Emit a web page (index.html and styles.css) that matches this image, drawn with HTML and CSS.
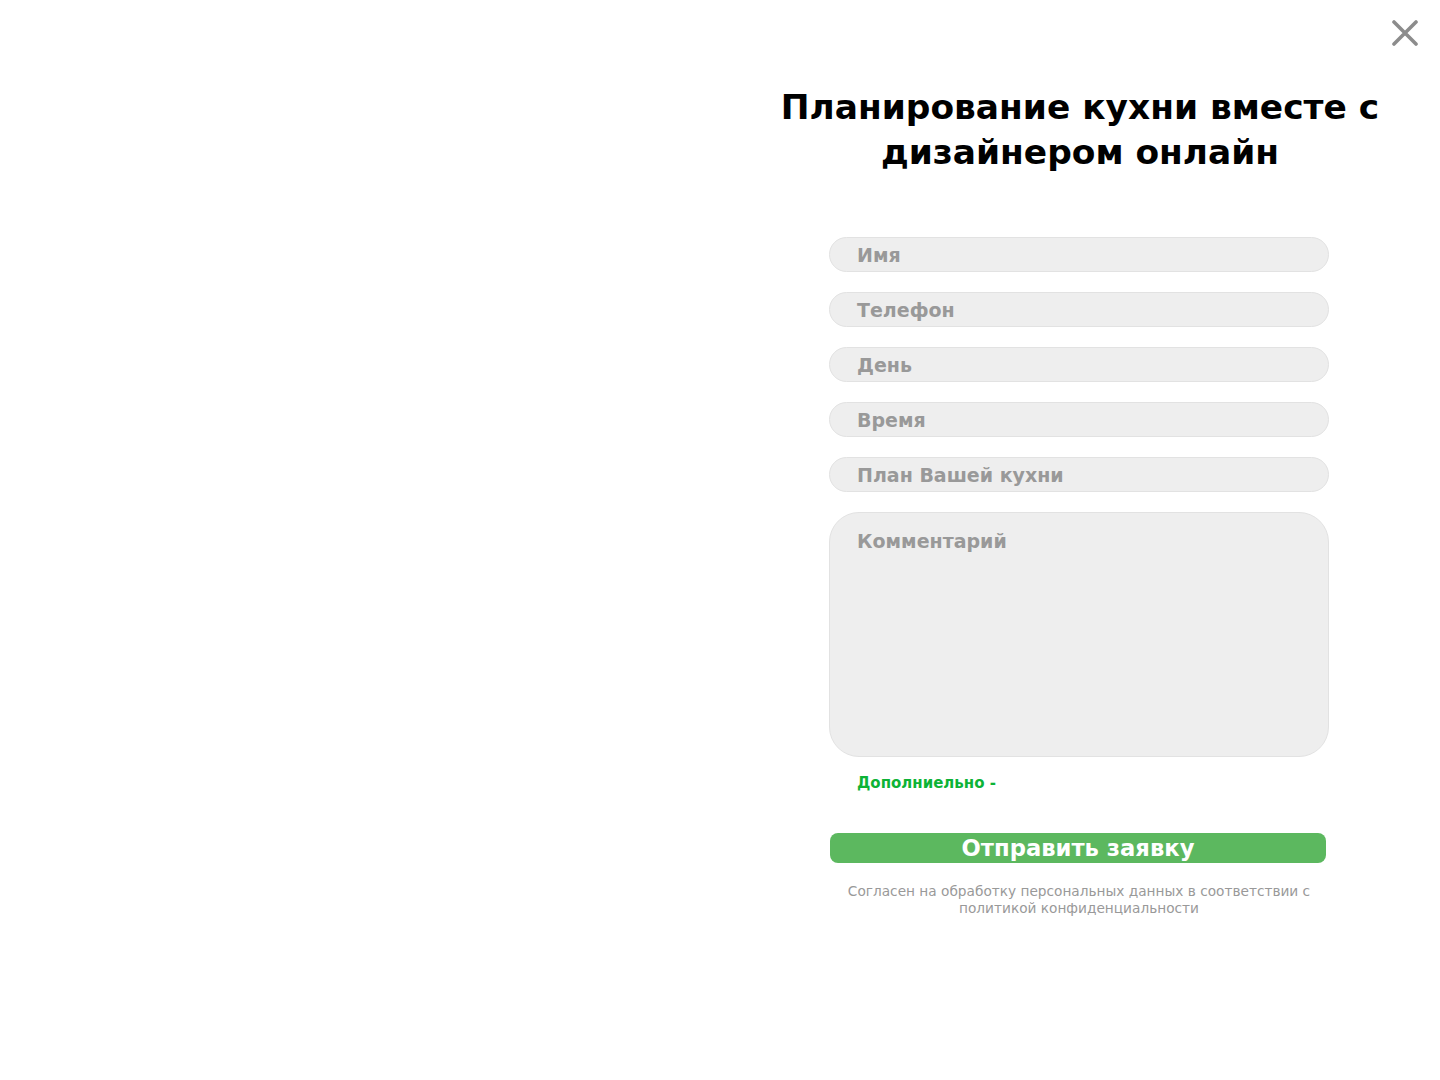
FILE: index.html
```html
<!DOCTYPE html>
<html lang="ru">
<head>
<meta charset="utf-8">
<title>Планирование кухни</title>
<link rel="stylesheet" href="styles.css">
</head>
<body>
<div class="page">
  <div class="left"></div>
  <div class="right">
    <h1 class="title">Планирование кухни вместе с дизайнером онлайн</h1>
    <form class="form">
      <div class="field">Имя</div>
      <div class="field">Телефон</div>
      <div class="field">День</div>
      <div class="field">Время</div>
      <div class="field">План Вашей кухни</div>
      <div class="field area">Комментарий</div>
      <div class="extra">Дополниельно -</div>
      <button type="button" class="submit">Отправить заявку</button>
      <p class="consent">Согласен на обработку персональных данных в соответствии с политикой конфиденциальности</p>
    </form>
  </div>
  <button class="close" type="button" aria-label="Закрыть">
    <svg width="26" height="26" viewBox="0 0 26 26"><path d="M2 2 L24 24 M24 2 L2 24" stroke="#8c8c8c" stroke-width="3.6" stroke-linecap="round"/></svg>
  </button>
</div>
</body>
</html>
```
FILE: styles.css
```css
* { box-sizing: border-box; }
html, body { margin: 0; padding: 0; background: #fff; }
body { font-family: "DejaVu Sans", sans-serif; }
.page { position: relative; display: flex; width: 1440px; height: 1080px; }
.left { width: 720px; }
.right { width: 720px; display: flex; flex-direction: column; align-items: center; padding-top: 85px; }
.title { margin: 0; width: 640px; text-align: center; font-size: 34.4px; line-height: 45px; font-weight: 700; color: #000; }
.form { width: 500px; margin: 0 0 0 -2px; padding-top: 62px; display: flex; flex-direction: column; }
.field { height: 35px; border: 1px solid #e2e2e2; background: #eeeeee; border-radius: 18px; padding-left: 27px; font-size: 19px; font-weight: 700; color: #999; line-height: 34px; margin-bottom: 20px; }
.field.area { height: 245px; border-radius: 30px; padding-top: 11px; margin-bottom: 0; }
.extra { margin-top: 16px; padding-left: 28px; font-size: 15px; font-weight: 700; color: #0db336; line-height: 20px; }
.submit { margin-top: 40px; margin-left: 1px; width: 496px; height: 30px; border: 0; border-radius: 8px; background: #5cb85f; color: #fff; font-family: inherit; font-size: 22.7px; font-weight: 700; line-height: 30px; padding: 0; }
.consent { margin: 20px 0 0; text-align: center; font-size: 13.7px; line-height: 17px; color: #999; padding: 0 4px; }
.close { position: absolute; top: 20px; right: 22px; background: none; border: 0; padding: 0; width: 26px; height: 26px; }
.close svg { display: block; }
```
